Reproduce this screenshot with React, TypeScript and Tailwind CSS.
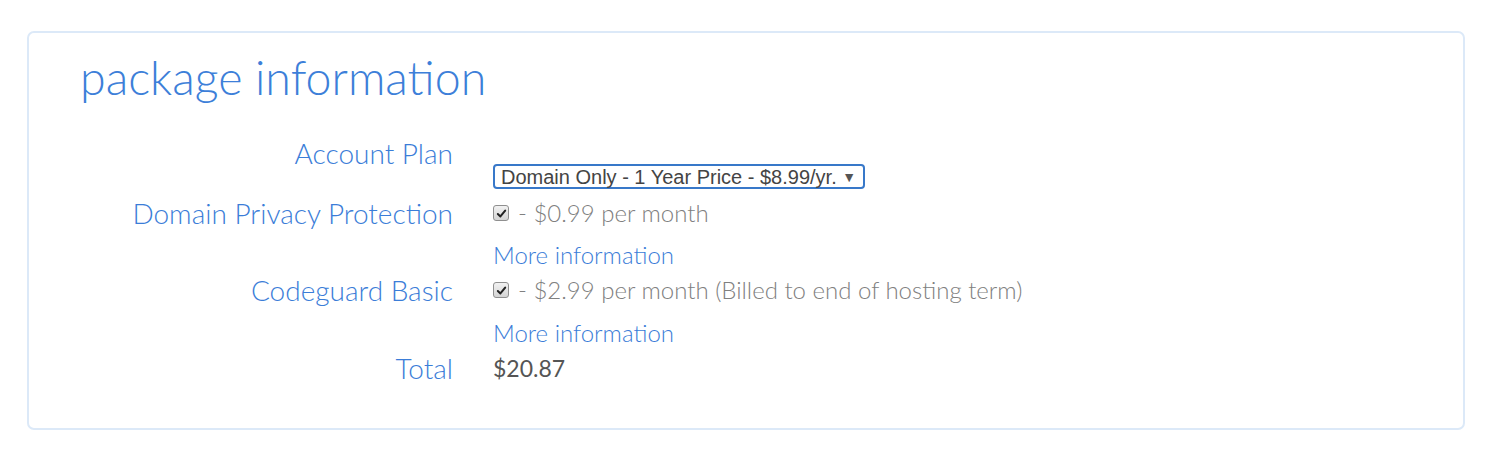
import React from 'react'

const labelCls = 'w-[373px] shrink-0 text-right text-[28px] font-light leading-[36px] text-[#3b7dd8]'

function Check() {
  return (
    <span className="inline-flex h-[16px] w-[16px] items-center justify-center rounded-[3px] border border-[#8f8f8f] bg-gradient-to-b from-[#f2f2f2] to-[#d4d4d4] align-middle">
      <svg viewBox="0 0 12 12" className="h-[11px] w-[11px]">
        <path d="M2 6.5 L4.8 9.2 L10 2.8" fill="none" stroke="#222" strokeWidth="2.2" strokeLinecap="round" strokeLinejoin="round" />
      </svg>
    </span>
  )
}

export default function App() {
  return (
    <div className="min-h-[458px] bg-white pt-[31px] pl-[27px] pr-[29px]" style={{ fontFamily: 'Lato, "Open Sans", sans-serif' }}>
      <div className="h-[399px] rounded-[7px] border-2 border-[#dce9f8] pl-[51px] pt-[17px]">
        <h1 className="text-[46.5px] font-light leading-[55px] text-[#3d7fd9]">package information</h1>

        <div className="mt-[30px] flex flex-col">
          <div className="flex gap-[40px]">
            <div className={labelCls}>Account Plan</div>
            <div className="pt-[29px]">
              <div className="flex h-[25px] w-[372px] items-center justify-between rounded-[4px] border-2 border-[#3878c9] pl-[6px] pr-[7px] text-[20px] leading-none text-[#444]" style={{ fontFamily: '"Liberation Sans", Arial, sans-serif' }}>
                <span>Domain Only - 1 Year Price - $8.99/yr.</span>
                <span className="text-[14px] text-[#555]">▼</span>
              </div>
            </div>
          </div>

          <div className="mt-[6px] flex gap-[40px]">
            <div className={labelCls}>Domain Privacy Protection</div>
            <div className="text-[24px] font-light leading-[36px]">
              <div className="flex items-center gap-[9px] text-[#808080]">
                <Check />
                <span>- $0.99 per month</span>
              </div>
              <div className="mt-[6px] text-[#3b7dd8]">More information</div>
            </div>
          </div>

          <div className="-mt-[1px] flex gap-[40px]">
            <div className={labelCls}>Codeguard Basic</div>
            <div className="text-[24px] font-light leading-[36px]">
              <div className="flex items-center gap-[9px] text-[#808080]">
                <Check />
                <span>- $2.99 per month (Billed to end of hosting term)</span>
              </div>
              <div className="mt-[7px] text-[#3b7dd8]">More information</div>
            </div>
          </div>

          <div className="-mt-[1px] flex gap-[40px]">
            <div className={labelCls}>Total</div>
            <div className="text-[23px] leading-[36px] text-[#555]">$20.87</div>
          </div>
        </div>
      </div>
    </div>
  )
}
